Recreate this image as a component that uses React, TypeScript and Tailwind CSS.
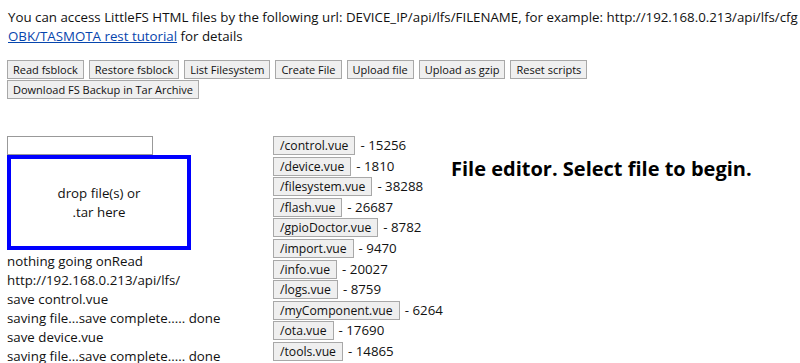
import React from 'react';

const ACTIONS = [
  'Read fsblock',
  'Restore fsblock',
  'List Filesystem',
  'Create File',
  'Upload file',
  'Upload as gzip',
  'Reset scripts',
];

const FILES = [
  { name: '/control.vue', size: 15256 },
  { name: '/device.vue', size: 1810 },
  { name: '/filesystem.vue', size: 38288 },
  { name: '/flash.vue', size: 26687 },
  { name: '/gpioDoctor.vue', size: 8782 },
  { name: '/import.vue', size: 9470 },
  { name: '/info.vue', size: 20027 },
  { name: '/logs.vue', size: 8759 },
  { name: '/myComponent.vue', size: 6264 },
  { name: '/ota.vue', size: 17690 },
  { name: '/tools.vue', size: 14865 },
];

const LOG = [
  'nothing going onRead',
  'http://192.168.0.213/api/lfs/',
  'save control.vue',
  'saving file...save complete..... done',
  'save device.vue',
  'saving file...save complete..... done',
];

const Btn: React.FC<{ children: React.ReactNode; big?: boolean }> = ({ children, big }) => (
  <button
    className={
      big
        ? 'h-[19px] px-[6px] bg-[#efefef] border border-[#a8a8a8] text-[12.2px] leading-[17px] text-[#111] whitespace-nowrap'
        : 'h-[19px] px-[5px] bg-[#efefef] border border-[#a8a8a8] text-[11px] leading-[17px] text-[#111] whitespace-nowrap'
    }
  >
    {children}
  </button>
);

const App: React.FC = () => {
  return (
    <div className="h-[363px] overflow-hidden bg-white text-[#111] text-[13.3px] leading-[19px] px-[8px] pt-[8px] font-['Open_Sans',sans-serif]">
      {/* Intro */}
      <div className="whitespace-nowrap">
        You can access LittleFS HTML files by the following url: DEVICE_IP/api/lfs/FILENAME, for example: http://192.168.0.213/api/lfs/cfg
      </div>
      <div>
        <a href="#" className="text-[#0645ad] underline">OBK/TASMOTA rest tutorial</a> for details
      </div>

      {/* Actions */}
      <div className="mt-[14px] -ml-px flex flex-wrap gap-x-[5px] gap-y-[1px] w-[620px]">
        {ACTIONS.map(a => <Btn key={a}>{a}</Btn>)}
        <Btn>Download FS Backup in Tar Archive</Btn>
      </div>

      {/* Main */}
      <div className="mt-[37px] flex">
        <div className="w-[266px] shrink-0 -ml-px">
          <input className="block w-[146px] h-[19px] border border-[#999] bg-white" />
          <div className="w-[184px] h-[95px] border-[4px] border-[#0000ff] flex flex-col items-center justify-center text-center">
            <div>drop file(s) or</div>
            <div>.tar here</div>
          </div>
          <div className="mt-[2px]">
            {LOG.map((l, i) => <div key={i} className="whitespace-nowrap">{l}</div>)}
          </div>
        </div>

        <div className="w-[178px] shrink-0">
          {FILES.map(f => (
            <div key={f.name} className="h-[20.6px] flex items-start whitespace-nowrap">
              <Btn big>{f.name}</Btn>
              <span className="ml-[5px] leading-[19px]">- {f.size}</span>
            </div>
          ))}
        </div>

        <div className="pt-[21px]">
          <h3 className="text-[20px] font-bold leading-[24px] text-black whitespace-nowrap">File editor. Select file to begin.</h3>
        </div>
      </div>
    </div>
  );
};

export default App;
